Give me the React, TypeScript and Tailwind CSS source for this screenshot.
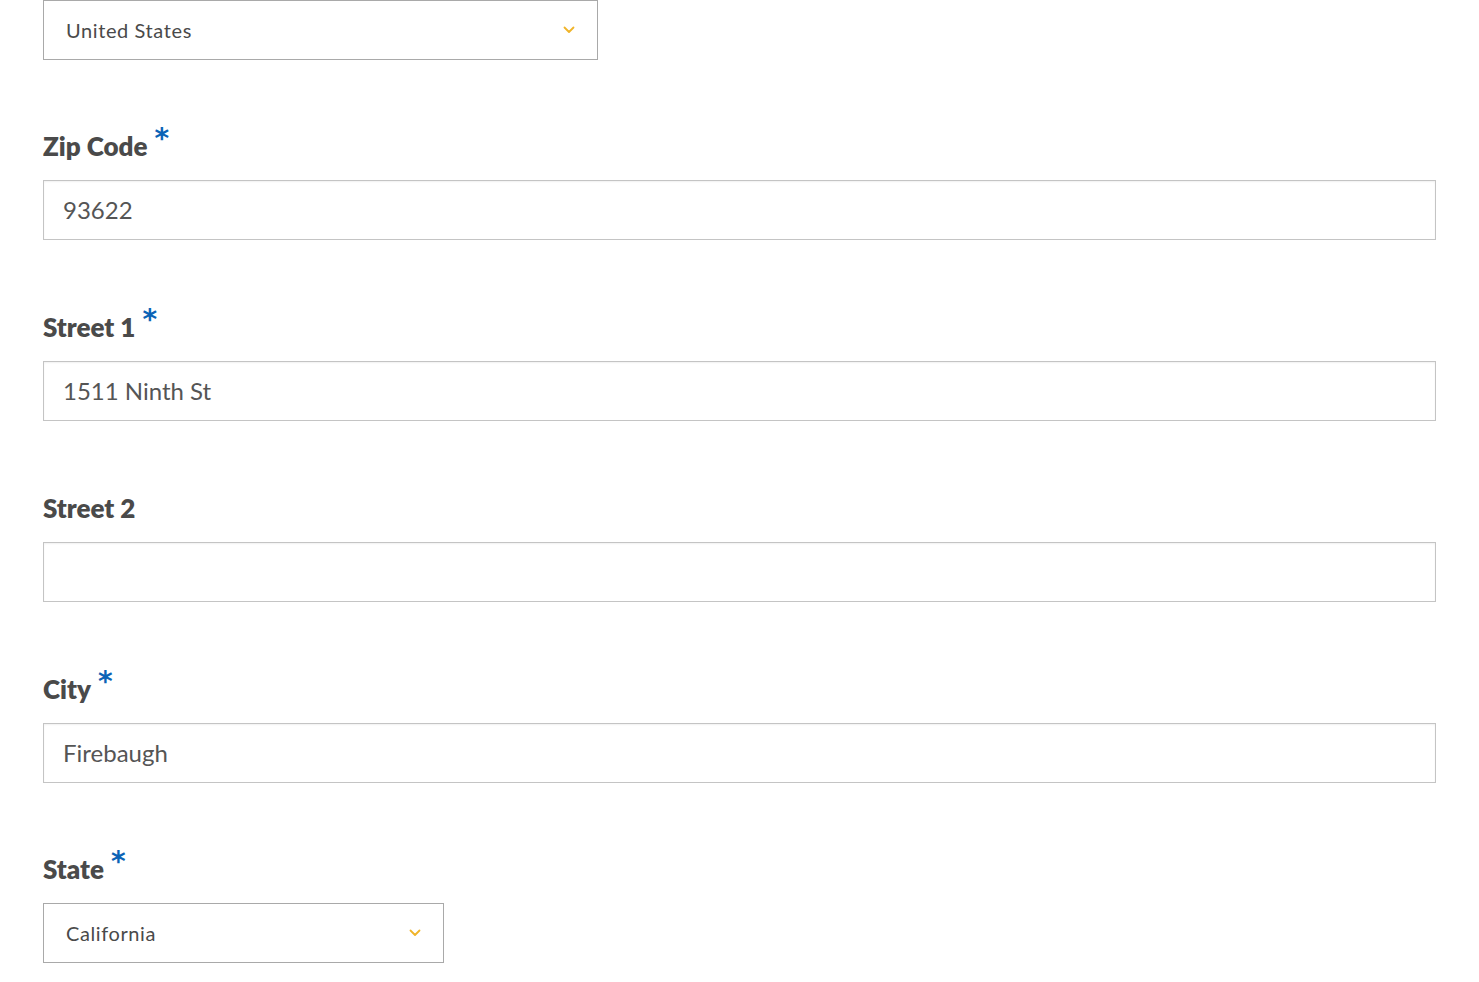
import React from 'react';

const font = { fontFamily: '"Lato", "Liberation Sans", sans-serif' };

const Chevron = () => (
  <svg width="12" height="8" viewBox="0 0 12 8" className="flex-shrink-0">
    <path d="M1.5 1.5 L6 6 L10.5 1.5" fill="none" stroke="#f0b429" strokeWidth="1.8" strokeLinecap="round" strokeLinejoin="round" />
  </svg>
);

const Label = ({ text, required }: { text: string; required?: boolean }) => (
  <label className="flex items-start h-[32px] text-[26px] leading-[32px] font-extrabold text-[#4a4a4a] mb-[19px]">
    <span className="mt-[1px]">{text}</span>
    {required && (
      <span
        className="ml-[7px] -mt-[6px] text-[28px] leading-[32px] font-bold text-[#0b63b6]"
        style={{ fontFamily: '"DejaVu Sans", sans-serif' }}
      >
        *
      </span>
    )}
  </label>
);

const TextInput = ({ value }: { value: string }) => (
  <div className="h-[60px] w-full border border-[#c4c4c4] bg-white flex items-center px-[19px] shadow-[inset_0_1px_2px_rgba(0,0,0,0.06)]">
    <span className="text-[24px] text-[#555555]">{value}</span>
  </div>
);

const Select = ({ value, width }: { value: string; width: string }) => (
  <div className={`h-[60px] ${width} border border-[#a9a9a9] bg-white flex items-center justify-between pl-[22px] pr-[22px]`}>
    <span className="text-[20px] tracking-[0.6px] text-[#4a4a4a]">{value}</span>
    <Chevron />
  </div>
);

export default function App() {
  const fields = [
    { label: 'Zip Code', required: true, value: '93622' },
    { label: 'Street 1', required: true, value: '1511 Ninth St' },
    { label: 'Street 2', required: false, value: '' },
    { label: 'City', required: true, value: 'Firebaugh' },
  ];

  return (
    <div className="min-h-screen bg-white px-[43px]" style={font}>
      <Select value="United States" width="w-[555px]" />
      {fields.map((f, i) => (
        <div key={f.label} className={i === 0 ? 'mt-[69px]' : 'mt-[70px]'}>
          <Label text={f.label} required={f.required} />
          <TextInput value={f.value} />
        </div>
      ))}
      <div className="mt-[69px]">
        <Label text="State" required />
        <Select value="California" width="w-[401px]" />
      </div>
    </div>
  );
}
